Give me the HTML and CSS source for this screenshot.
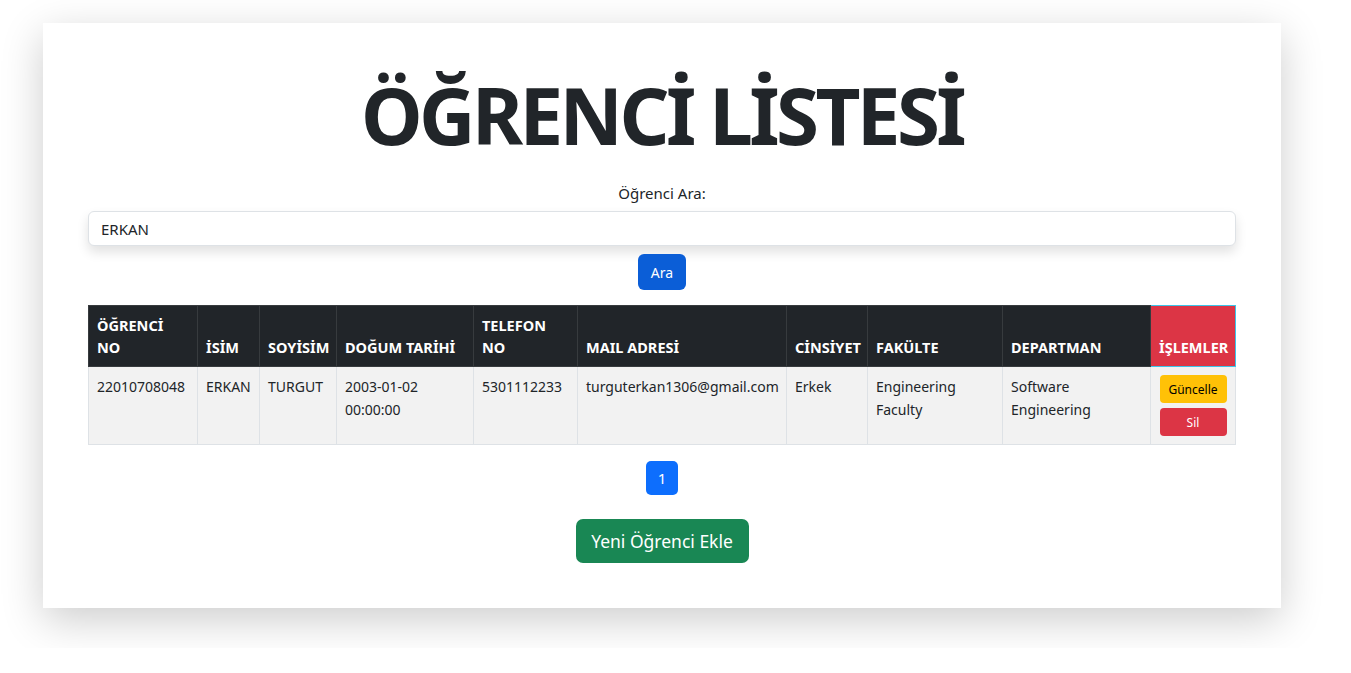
FILE: index.html
```html
<!DOCTYPE html>
<html lang="tr">
<head>
<meta charset="utf-8">
<title>Öğrenci Listesi</title>
<link rel="stylesheet" href="styles.css">
</head>
<body>
<div class="card">
  <h1 class="title">ÖĞRENCİ LİSTESİ</h1>
  <form class="search">
    <label class="search-label" for="q">Öğrenci Ara:</label>
    <input class="search-input" id="q" type="text" value="ERKAN">
    <button class="btn btn-search" type="button">Ara</button>
  </form>
  <table class="students">
    <colgroup>
      <col class="c1"><col class="c2"><col class="c3"><col class="c4"><col class="c5">
      <col class="c6"><col class="c7"><col class="c8"><col class="c9"><col class="c10">
    </colgroup>
    <thead>
      <tr>
        <th>ÖĞRENCİ NO</th>
        <th>İSİM</th>
        <th>SOYİSİM</th>
        <th>DOĞUM TARİHİ</th>
        <th>TELEFON NO</th>
        <th>MAIL ADRESİ</th>
        <th>CİNSİYET</th>
        <th>FAKÜLTE</th>
        <th>DEPARTMAN</th>
        <th class="th-actions">İŞLEMLER</th>
      </tr>
    </thead>
    <tbody>
      <tr>
        <td>22010708048</td>
        <td>ERKAN</td>
        <td>TURGUT</td>
        <td>2003-01-02 00:00:00</td>
        <td>5301112233</td>
        <td class="nowrap">turguterkan1306@gmail.com</td>
        <td>Erkek</td>
        <td>Engineering Faculty</td>
        <td>Software Engineering</td>
        <td class="td-actions">
          <button class="btn btn-warn" type="button">Güncelle</button>
          <button class="btn btn-del" type="button">Sil</button>
        </td>
      </tr>
    </tbody>
  </table>
  <nav class="pager"><a class="page-link">1</a></nav>
  <div class="add-row"><button class="btn btn-add" type="button">Yeni Öğrenci Ekle</button></div>
</div>
</body>
</html>
```
FILE: styles.css
```css
html, body {
  margin: 0;
  padding: 0;
  background: #fff;
}
body {
  font-family: "Noto Sans", "Open Sans", sans-serif;
  color: #212529;
  font-size: 15px;
  line-height: 1.5;
  padding: 23px 0 40px;
}
.card {
  width: 1148px;
  margin-left: 43px;
  padding: 42px 45px 45px;
  background: #fff;
  box-shadow: 0 12px 40px rgba(0, 0, 0, 0.2);
}
.title {
  margin: 0 0 16px;
  text-align: center;
  font-size: 78px;
  font-weight: 700;
  line-height: 101px;
  letter-spacing: -3.6px;
}
.search {
  display: flex;
  flex-direction: column;
  align-items: center;
  margin: 0;
}
.search-label {
  font-size: 15px;
  line-height: 22px;
  margin-bottom: 7px;
}
.search-input {
  box-sizing: border-box;
  width: 100%;
  height: 35px;
  padding: 4px 12px;
  border: 1px solid #dee2e6;
  border-radius: 6px;
  font: inherit;
  font-size: 15px;
  color: #212529;
  box-shadow: 0 6px 12px rgba(0, 0, 0, 0.12);
  outline: none;
}
.btn {
  border: 0;
  font-family: inherit;
  cursor: pointer;
  color: #fff;
}
.btn-search {
  margin-top: 8px;
  width: 48px;
  height: 36px;
  border-radius: 6px;
  background: #0b5ed7;
  font-size: 14px;
}
.students {
  margin-top: 15px;
  width: 1147px;
  border-collapse: collapse;
  table-layout: fixed;
}
.c1 { width: 109px; }
.c2 { width: 62px; }
.c3 { width: 77px; }
.c4 { width: 137px; }
.c5 { width: 104px; }
.c6 { width: 209px; }
.c7 { width: 81px; }
.c8 { width: 135px; }
.c9 { width: 148px; }
.c10 { width: 85px; }
.students th,
.students td {
  padding: 8px;
  text-align: left;
  font-size: 14px;
  line-height: 23px;
}
.students th {
  background: #212529;
  color: #fff;
  font-weight: 700;
  font-size: 14.5px;
  line-height: 22px;
  vertical-align: bottom;
  border: 1px solid #373b3e;
}
.students th.th-actions {
  background: #dc3545;
  border: 1px solid #3dc4e8;
}
.students td {
  background: #f2f2f2;
  border: 1px solid #dee2e6;
  vertical-align: top;
  height: 61px;
  color: #212529;
}
.nowrap { white-space: nowrap; }
.btn-warn,
.btn-del {
  display: block;
  width: 67px;
  height: 28px;
  margin: 0 auto 5px;
  border-radius: 4px;
  font-size: 12px;
}
.btn-warn {
  background: #ffc107;
  color: #000;
}
.btn-del {
  background: #dc3545;
  margin-bottom: 0;
}
.pager {
  display: flex;
  justify-content: center;
  margin-top: 16px;
}
.page-link {
  display: flex;
  align-items: center;
  justify-content: center;
  width: 32px;
  height: 34px;
  border-radius: 5px;
  background: #0d6efd;
  color: #fff;
  font-size: 15px;
}
.add-row {
  display: flex;
  justify-content: center;
  margin-top: 24px;
}
.btn-add {
  width: 173px;
  height: 44px;
  border-radius: 7px;
  background: #198754;
  font-size: 17.5px;
}
```
